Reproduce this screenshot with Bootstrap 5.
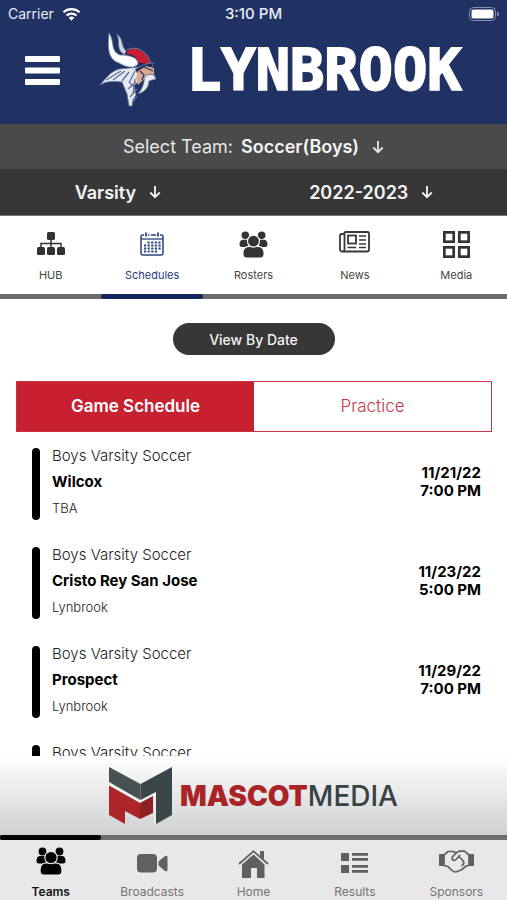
<!DOCTYPE html>
<html lang="en">
<head>
<meta charset="utf-8">
<meta name="viewport" content="width=device-width, initial-scale=1">
<title>Lynbrook Athletics</title>
<link href="https://cdn.jsdelivr.net/npm/bootstrap@5.3.0/dist/css/bootstrap.min.css" rel="stylesheet">
<style>
  body { font-family: Inter, "Liberation Sans", sans-serif; color: #000; background: #fff; }
  a { color: inherit; text-decoration: none; }
  svg { display: block; flex: none; }
  .app-header { background: #1f3263; color: #fff; }
  .status { height: 28px; font-size: 14px; line-height: 28px; color: #e9ecf5; }
  .status-time { font-size: 15px; font-weight: 500; }
  .brand-bar { height: 96px; padding: 0 24px 12px; }
  .menu-btn { width: 37px; }
  .brand-logo { margin-left: 38px; }
  .wordmark { font: 700 57px/64px "DejaVu Sans Mono", "Liberation Mono", monospace; margin-left: 28px; -webkit-text-stroke: 2px #fff; }
  .team-bar { background: #4a4a4a; height: 45px; font-size: 18px; color: #e6e6e6; }
  .level-bar { background: #373737; height: 47px; font-size: 18px; color: #f4f4f4; border-bottom: 1px solid #777; }
  .picker { appearance: none; border: 0; background: none; color: #f4f4f4; font-weight: 600; padding: 0; margin-right: 12px; }
  .tab-link { flex: 1 1 0; font-size: 12px; line-height: 16px; color: #444; }
  .top-tabs .tab-link { font-size: 11px; padding: 14px 0 11px; gap: 9px; }
  .top-tabs .tab-link.current { color: #26397c; }
  .rail { height: 5px; background: #6c6c6c; }
  .rail-mark { height: 5px; width: 20%; border-radius: 3px; background: #10255c; }
  .rail-mark.second { margin-left: 20%; }
  .icon-box { height: 28px; }
  .date-btn { width: 162px; height: 32px; background: #373737; color: #f4f4f4; font-size: 14px; font-weight: 500; border: 0; margin: 24px 0 26px; }
  .switch { height: 51px; margin: 0 15px 0 16px; border: 1px solid #cc3347; }
  .switch button { flex: 1 1 0; border: 0; background: #fff; color: #cc3347; font-size: 17px; font-weight: 300; }
  .switch button.chosen { background: #c72031; color: #fff; font-weight: 600; }
  .games { flex: 1 1 0; min-height: 0; overflow: hidden; padding: 16px 26px 0 32px; }
  .game { min-height: 72px; margin-bottom: 27px; }
  .game-bar { width: 8px; border-radius: 4px; background: #000; }
  .game-team { font-size: 15px; line-height: 16px; font-weight: 300; color: #222; }
  .game-rival { font-size: 15px; line-height: 20px; font-weight: 700; }
  .game-place { font-size: 13px; line-height: 16px; font-weight: 300; color: #222; }
  .game-info { padding-bottom: 4px; }
  .game-when { font-size: 15px; line-height: 18px; font-weight: 700; padding-bottom: 4px; }
  .ad { height: 79px; background: linear-gradient(#fff, #cfd0d2); }
  .ad-name { font-size: 28px; line-height: 32px; color: #384244; font-weight: 500; }
  .ad-name b { color: #a92327; font-weight: 900; }
  .bottom-tabs { background: #e8e8e8; }
  .bottom-tabs .tab-link { color: #747474; padding: 7px 0 0; gap: 9px; height: 60px; }
  .bottom-tabs .tab-link.current { color: #111; font-weight: 600; }
</style>
<script src="https://cdn.jsdelivr.net/npm/bootstrap@5.3.0/dist/js/bootstrap.bundle.min.js"></script>
</head>
<body class="d-flex flex-column vh-100 overflow-hidden">

<svg width="0" height="0" class="position-absolute" aria-hidden="true">
  <defs>
    <symbol id="arrow" viewBox="0 0 12 14"><path d="M6 1v11M1.300 7.500 6 12.200l4.700-4.700" fill="none" stroke="currentColor" stroke-width="1.800"/></symbol>
    <symbol id="people" viewBox="0 0 30 28">
      <g fill="currentColor"><circle cx="6.500" cy="4.500" r="3.900"/><circle cx="23.500" cy="4.500" r="3.900"/>
      <path d="M4 9h5l2 3-2 4.500H3c-2 0-2.500-1-2.500-3C.5 11 2 9 4 9zM26 9h-5l-2 3 2 4.500h6c2 0 2.500-1 2.500-3 0-2.500-1.500-4.500-3.500-4.500z"/></g>
      <g fill="currentColor" stroke="var(--halo)" stroke-width="1.200"><path d="M10 16h10c3.500 0 6 3 6 7.500 0 3-1 4.500-3.500 4.500h-15C5 28 4 26.500 4 23.500 4 19 6.500 16 10 16z"/><circle cx="15" cy="10.500" r="6.200"/></g>
    </symbol>
  </defs>
</svg>

<header class="app-header">
  <div class="status row g-0 px-2">
    <div class="col d-flex align-items-center gap-1 ps-0">
      <span>Carrier</span>
      <svg class="ms-1" width="19" height="14" viewBox="0 0 20 14" fill="none" stroke="#fff" stroke-width="2.300"><path d="M1.500 5.200a12.500 12.500 0 0 1 17 0M4.700 8.600a8 8 0 0 1 10.600 0"/><path d="M7 10.800a4.600 4.600 0 0 1 6 0L10 14z" fill="#fff" stroke="none"/></svg>
    </div>
    <div class="col-auto status-time">3:10 PM</div>
    <div class="col d-flex align-items-center justify-content-end">
      <svg width="30" height="14" viewBox="0 0 30 14"><rect x=".5" y=".5" width="26" height="13" rx="4" fill="none" stroke="#8590b0"/><rect x="2.500" y="2.500" width="22" height="9" rx="2" fill="#fff"/><path d="M28 4.500q2 .8 2 2.500t-2 2.500z" fill="#8590b0"/></svg>
    </div>
  </div>
  <div class="brand-bar d-flex align-items-center">
    <button class="menu-btn btn p-0 border-0" aria-label="Menu">
      <svg width="37" height="31" viewBox="0 0 37 31" fill="#fff"><rect x="1" y="1" width="35" height="6" rx="1"/><rect x="1" y="12.500" width="35" height="6" rx="1"/><rect x="1" y="24" width="35" height="6" rx="1"/></svg>
    </button>
    <svg class="brand-logo" width="60" height="74" viewBox="0 0 60 74" role="img" aria-label="Viking">
      <path d="M1 52c6-7 10-13 19-16l21-2 4 3-5 11-5 5 2 9-3 5-1 6h-3l-2-12-5-12c-9-1-16-1-22 3z" fill="#e4e9f1" stroke="#5f6f95" stroke-width=".8"/>
      <path d="M7 47l15-9M14 47l12-9M23 48l7-9M30 50l6-12M34 61l2-15M31 64l7-8M29 56l8-7M34 69l4-6M31 50l5 5" stroke="#5f6f95" stroke-width="1.300" fill="none"/>
      <path d="M18 1c7 6 3 10 9 17l4 1-4 4-5-4C18 14 21 9 18 1z" fill="#cdd5e3" stroke="#6b7a9e" stroke-width=".8"/>
      <path d="M27 19c5-6 14-4 20 2 3 3 4 7 5 11l-14-2c0-6-4-8-12-9z" fill="#cb1c37" stroke="#152046"/>
      <path d="M28 17c9-5 21 1 24 14" stroke="#8f9bb8" stroke-width=".8" fill="none"/>
      <path d="M10 0c6 9 1 18 11 22 9 0 18 2 18 9-5 6-14 2-19-1C8 26 9 14 10 0z" fill="#fff" stroke="#7180a3" stroke-width=".8"/>
      <path d="M36 36c6-2 9-6 19-6l-3 5-14 5z" fill="#1a2855" stroke="#8290b1" stroke-width=".7"/>
      <path d="M39 38l8-5 8 2v6l2 5-7 2-6-1-5 5-2-6z" fill="#dda98d"/>
      <path d="M45 34l9 4M41 38l4 4-2 5" stroke="#26345f" stroke-width="1.300" fill="none"/>
      <path d="M55 42c-6-2-10 1-10 6-1 6-3 9-6 13 7-2 11-7 11-13l7-2z" fill="#e7ebf3" stroke="#5f6f95" stroke-width=".9"/>
    </svg>
    <div class="wordmark">LYNBROOK</div>
  </div>
</header>

<div class="team-bar d-flex justify-content-center align-items-center">
  <label for="team" class="me-2">Select Team:</label>
  <select id="team" class="picker"><option>Soccer(Boys)</option></select>
  <svg width="12" height="14"><use href="#arrow"/></svg>
</div>
<div class="level-bar row g-0">
  <div class="col-5 d-flex justify-content-center align-items-center ps-4">
    <select class="picker" aria-label="Level"><option>Varsity</option></select>
    <svg width="12" height="14"><use href="#arrow"/></svg>
  </div>
  <div class="col-7 d-flex justify-content-center align-items-center ps-4">
    <select class="picker" aria-label="Season"><option>2022-2023</option></select>
    <svg width="12" height="14"><use href="#arrow"/></svg>
  </div>
</div>

<nav class="top-tabs" aria-label="Team sections">
  <div class="d-flex">
    <a href="#hub" class="tab-link d-flex flex-column align-items-center">
      <span class="icon-box d-flex align-items-center"><svg width="28" height="24" viewBox="0 0 28 24" fill="#333"><rect x="10" y="0" width="8" height="8" rx="1.500"/><rect x="0" y="15" width="8" height="8" rx="1.500"/><rect x="10" y="15" width="8" height="8" rx="1.500"/><rect x="20" y="15" width="8" height="8" rx="1.500"/><path d="M14 7v9M4 16v-4.500h20V16" fill="none" stroke="#333" stroke-width="1.500"/></svg></span>
      HUB
    </a>
    <a href="#schedules" class="tab-link current d-flex flex-column align-items-center" aria-current="page">
      <span class="icon-box d-flex align-items-center"><svg width="24" height="24" viewBox="0 0 24 24" fill="none" stroke="#2e4380"><path d="M4 3H2.500A1.500 1.500 0 0 0 1 4.500V21a2 2 0 0 0 2 2h18a2 2 0 0 0 2-2V4.500A1.500 1.500 0 0 0 21.500 3H20M8 3h1.500M11 3h5" stroke-width="1.500"/><path d="M6 .5v4M18 .5v4" stroke-width="1.800"/><path d="M1 7h22" stroke-width="1.300"/><path d="M7.500 10.500H21M4 13.500h17M4 16.500h17M4 19.500h13" stroke-width="1.800" stroke-dasharray="2.200 1.400"/></svg></span>
      Schedules
    </a>
    <a href="#rosters" class="tab-link d-flex flex-column align-items-center">
      <span class="icon-box d-flex align-items-center"><svg width="29" height="27" style="--halo:#fff" color="#333"><use href="#people"/></svg></span>
      Rosters
    </a>
    <a href="#news" class="tab-link d-flex flex-column align-items-center">
      <span class="icon-box d-flex align-items-center pb-1"><svg width="31" height="22" viewBox="0 0 31 22" fill="none" stroke="#383838" stroke-width="1.800"><path d="M5.500 1h23A1.500 1.500 0 0 1 30 2.500v16a2 2 0 0 1-2 2H3a2 2 0 0 1-2-2V4.500A1.500 1.500 0 0 1 2.500 3h3M5.500 1v17.500a2 2 0 0 1-2.300 2"/><rect x="9" y="4.500" width="8" height="8"/><path d="M20 5h7M20 9h7M20 13h7M8.500 16.500H17M20 16.500h7" stroke-width="1.500"/></svg></span>
      News
    </a>
    <a href="#media" class="tab-link d-flex flex-column align-items-center">
      <span class="icon-box d-flex align-items-end"><svg width="27" height="27" viewBox="0 0 26 26" fill="none" stroke="#333" stroke-width="2.600"><rect x="1.300" y="1.300" width="9" height="9"/><rect x="15.700" y="1.300" width="9" height="9"/><rect x="1.300" y="15.700" width="9" height="9"/><rect x="15.700" y="15.700" width="9" height="9"/></svg></span>
      Media
    </a>
  </div>
  <div class="rail d-flex"><div class="rail-mark second"></div></div>
</nav>

<main class="d-flex flex-column flex-grow-1 overflow-hidden">
  <div class="text-center"><button class="date-btn rounded-pill p-0">View By Date</button></div>
  <div class="switch d-flex">
    <button class="chosen">Game Schedule</button>
    <button>Practice</button>
  </div>
  <section class="games">
    <article class="game d-flex">
      <div class="game-bar"></div>
      <div class="game-info d-flex flex-column justify-content-between flex-grow-1 ms-2 ps-1">
        <div class="game-team">Boys Varsity Soccer</div><div class="game-rival">Wilcox</div><div class="game-place">TBA</div>
      </div>
      <div class="game-when text-end align-self-center">11/21/22<br>7:00 PM</div>
    </article>
    <article class="game d-flex">
      <div class="game-bar"></div>
      <div class="game-info d-flex flex-column justify-content-between flex-grow-1 ms-2 ps-1">
        <div class="game-team">Boys Varsity Soccer</div><div class="game-rival">Cristo Rey San Jose</div><div class="game-place">Lynbrook</div>
      </div>
      <div class="game-when text-end align-self-center">11/23/22<br>5:00 PM</div>
    </article>
    <article class="game d-flex">
      <div class="game-bar"></div>
      <div class="game-info d-flex flex-column justify-content-between flex-grow-1 ms-2 ps-1">
        <div class="game-team">Boys Varsity Soccer</div><div class="game-rival">Prospect</div><div class="game-place">Lynbrook</div>
      </div>
      <div class="game-when text-end align-self-center">11/29/22<br>7:00 PM</div>
    </article>
    <article class="game d-flex">
      <div class="game-bar"></div>
      <div class="ms-2 ps-1"><div class="game-team">Boys Varsity Soccer</div></div>
    </article>
  </section>
</main>

<footer>
  <a href="#mascotmedia" class="ad d-flex justify-content-center align-items-center">
    <svg class="me-2" width="63" height="57" viewBox="0 0 63 57"><path d="M31.500 17 63 0v48L47 57V25l-15.500 8z" fill="#3b4648"/><path d="M0 0l31.500 17v16L0 15z" fill="#475154"/><path d="M0 18.500 31 36v16l-15-8v13L0 48z" fill="#ab2529"/><path d="M31 36l13-7v17l-13 6z" fill="#8f2023"/><path d="M0 16.800l31.300 17.700L46 26.500V57" fill="none" stroke="#f1f1f2" stroke-width="1.500"/></svg>
    <span class="ad-name"><b>MASCOT</b>MEDIA</span>
  </a>
  <nav class="bottom-tabs" aria-label="Main">
    <div class="rail"><div class="rail-mark bg-black"></div></div>
    <div class="d-flex">
      <a href="#teams" class="tab-link current d-flex flex-column align-items-center" aria-current="page">
        <span class="icon-box d-flex align-items-center"><svg width="30" height="28" style="--halo:#e8e8e8" color="#000"><use href="#people"/></svg></span>
        Teams
      </a>
      <a href="#broadcasts" class="tab-link d-flex flex-column align-items-center">
        <span class="icon-box d-flex align-items-end"><svg width="31" height="21" viewBox="0 0 31 21" fill="#606060"><rect width="20" height="18.500" rx="4"/><path d="M21.500 7.500l6.500-5.500q2.500-1 2.500 1v13q0 2-2.500 1l-6.500-5.500z"/></svg></span>
        Broadcasts
      </a>
      <a href="#home" class="tab-link d-flex flex-column align-items-center">
        <span class="icon-box d-flex align-items-end"><svg class="mt-2" width="31" height="28" viewBox="0 0 31 28" overflow="visible"><g transform="translate(0 3)"><path d="M4 14.500 15.500 4.500l11 10V28H19V18h-6v10H4z" fill="#606060"/><path d="M1 14 15.500 1.200 30 14" fill="none" stroke="#606060" stroke-width="1.800"/><path d="M22 1h4v9l-4-3.500z" fill="#606060"/></g></svg></span>
        Home
      </a>
      <a href="#results" class="tab-link d-flex flex-column align-items-center">
        <span class="icon-box d-flex align-items-end"><svg width="27" height="22" viewBox="0 0 27 22" fill="#606060"><path d="M0 0h8v8H0zM0 12h8v8H0zM11 0h16v2.800H11zM11 5h16v2.800H11zM11 12h16v2.800H11zM11 17h16v2.800H11z"/></svg></span>
        Results
      </a>
      <a href="#sponsors" class="tab-link d-flex flex-column align-items-center">
        <span class="icon-box d-flex align-items-end"><svg width="35" height="25" viewBox="0 0 35 25" fill="none" stroke="#606060" stroke-width="1.700" stroke-linejoin="round" stroke-linecap="round"><path d="M0 4h5v12H0zM30 4h5v12h-5z" fill="#606060" stroke="none"/><path d="M5 5l4-3.500h5.500L17 3l3-1.800h5.500L30 5v10.500l-3 .5-4 3.500-6 2.500c-3 0-5-2-8-5.500l-4-1z"/><path d="M17 3l-3.500 4c-1.500 3 1.500 4.500 3.500 2.500L19.500 7c2 0 3.500 2.500 5 4.500 1 2 0 3-1.500 4M20.500 5.500l-1 1.500"/></svg></span>
        Sponsors
      </a>
    </div>
  </nav>
</footer>
</body>
</html>
